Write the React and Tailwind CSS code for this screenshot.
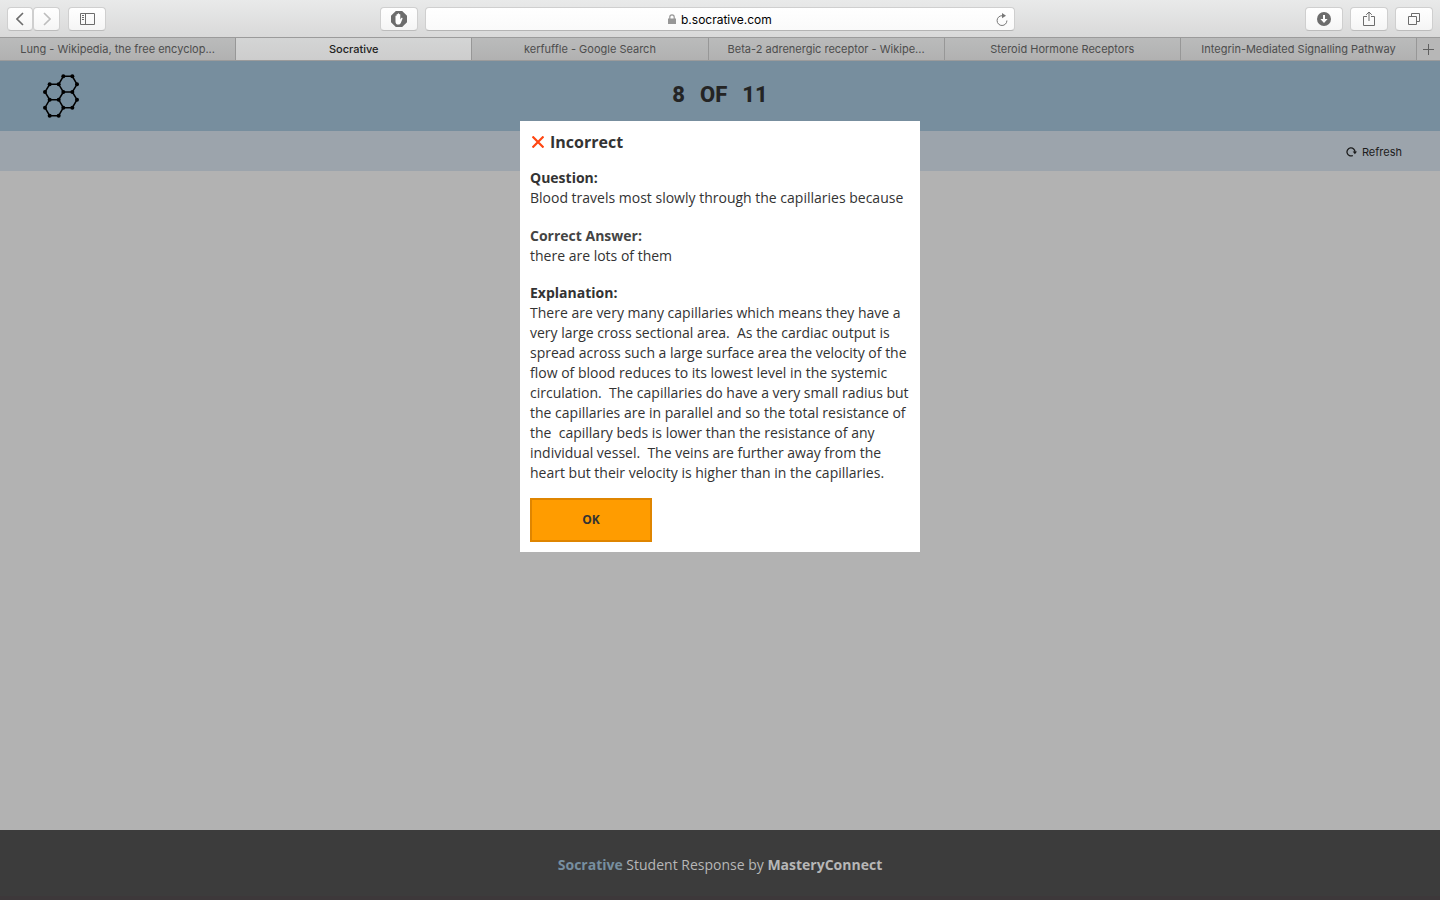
const toolButton =
  "flex h-6 items-center justify-center rounded border border-[#cfcfcf] border-b-[#bcbcbc] bg-linear-to-b from-white to-[#f5f5f5] text-[#6c6c6c]";

const tabs = [
  { title: "Lung - Wikipedia, the free encyclop..." },
  { title: "Socrative", active: true },
  { title: "kerfuffle - Google Search" },
  { title: "Beta-2 adrenergic receptor - Wikipe..." },
  { title: "Steroid Hormone Receptors" },
  { title: "Integrin-Mediated Signalling Pathway" },
];

const atoms = [
  [61, 6], [88, 6], [102, 30], [88, 53], [61, 53], [47, 30],
  [20, 30], [6, 53], [20, 76], [47, 76], [102, 76], [88, 100],
  [61, 100], [6, 100], [20, 124], [47, 124],
];

function Chevron({ flip }) {
  return (
    <svg width="8" height="14" viewBox="0 0 8 14" fill="none" stroke="currentColor" strokeWidth="1.6" aria-hidden="true">
      <path d={flip ? "M1 1l6 6-6 6" : "M7 1L1 7l6 6"} />
    </svg>
  );
}

function Toolbar() {
  return (
    <div className="flex h-[37px] items-center gap-[7px] bg-linear-to-b from-[#e9eaea] to-[#d9d9d9] px-[7px] pt-px">
      <div className="flex flex-1 items-center justify-between">
        <div className="flex gap-2">
          <div className="flex">
            <button className={`${toolButton} w-[26px]`} aria-label="Back"><Chevron /></button>
            <button className={`${toolButton} w-[27px]`} aria-label="Forward">
              <span className="text-[#bdbdbd]"><Chevron flip /></span>
            </button>
          </div>
          <button className={`${toolButton} w-[38px]`} aria-label="Show sidebar">
            <svg width="15" height="12" viewBox="0 0 15 12" fill="none" stroke="currentColor" aria-hidden="true">
              <path d="M.5.5h14v11H.5zM5.5.5v11M2 2.5h2M2 4.5h2M2 6.5h2" />
            </svg>
          </button>
        </div>
        <button className={`${toolButton} w-[38px]`} aria-label="Content blocker">
          <svg width="16" height="16" viewBox="0 0 16 16" aria-hidden="true">
            <path fill="currentColor" d="M4.8 0h6.4L16 4.8v6.4L11.2 16H4.8L0 11.2V4.8z" />
            <path
              fill="#fff"
              d="M4.500 5.100c0-.8 1.100-.8 1.100 0V3.600c0-.8 1.200-.8 1.200 0V2.900c0-.8 1.300-.8 1.300 0v.6c0-.8 1.200-.8 1.200 0v4.900l.8-1.200c.6-.8 1.700-.3 1.400.5l-1.400 3.600c-.5 1.500-1.400 2.300-2.800 2.300-1.900 0-2.800-1.300-2.800-3.200z"
            />
          </svg>
        </button>
      </div>
      <div className="flex h-6 w-[590px] min-w-0 items-center rounded border border-[#cfcfcf] border-b-[#b4b4b4] bg-linear-to-b from-white to-[#fafafa] px-1">
        <span className="w-4" />
        <label className="flex flex-1 items-center justify-center gap-[5px]">
          <svg width="8" height="10" viewBox="0 0 8 10" className="text-[#979797]" aria-hidden="true">
            <path fill="currentColor" d="M0 4.500h8V10H0z" />
            <path fill="none" stroke="currentColor" strokeWidth="1.200" d="M1.800 5V3a2.200 2.200 0 0 1 4.400 0v2" />
          </svg>
          <input
            type="text"
            aria-label="Address"
            defaultValue="b.socrative.com"
            className="w-[91px] bg-transparent p-0 pt-px text-[12px] leading-4 text-black outline-none"
          />
        </label>
        <button className="flex w-4 justify-center text-[#777]" aria-label="Reload">
          <svg width="12" height="13" viewBox="0 0 12 13" fill="none" stroke="currentColor" aria-hidden="true">
            <path d="M7.500 2.700H6A4.900 4.900 0 1 0 10.900 7.500" />
            <path fill="currentColor" stroke="none" d="M6 0l4 2.700-4 2.500z" />
          </svg>
        </button>
      </div>
      <div className="flex flex-1 items-center justify-end gap-[7px]">
        <button className={`${toolButton} w-[38px]`} aria-label="Downloads">
          <svg width="14" height="14" viewBox="0 0 14 14" aria-hidden="true">
            <circle cx="7" cy="7" r="7" fill="currentColor" />
            <path fill="#fff" d="M6 3h2v4h2.600L7 10.900 3.400 7H6z" />
          </svg>
        </button>
        <button className={`${toolButton} w-[38px]`} aria-label="Share">
          <svg width="12" height="16" viewBox="0 0 12 16" fill="none" stroke="currentColor" aria-hidden="true">
            <path d="M4 5.500H.5v9h11v-9H8M6 10V1M3.200 3.800L6 1l2.800 2.800" />
          </svg>
        </button>
        <button className={`${toolButton} w-[38px]`} aria-label="Show all tabs">
          <svg width="12" height="12" viewBox="0 0 12 12" fill="none" stroke="currentColor" aria-hidden="true">
            <path d="M.5 3.500h8v8h-8zM3.500 3.500v-3h8v8h-3" />
          </svg>
        </button>
      </div>
    </div>
  );
}

function TabStrip() {
  return (
    <nav className="flex h-6 border-y border-[#9b9b9b] text-[11px]" aria-label="Tabs">
      {tabs.map((tab) => (
        <button
          key={tab.title}
          className={`min-w-0 flex-1 truncate border-r border-[#979797] px-1 pt-px ${
            tab.active
              ? "bg-linear-to-b from-[#d4d5d5] to-[#cdcdcd] font-medium text-[#222]"
              : "bg-linear-to-b from-[#babbbb] to-[#b1b1b1] text-[#4d4d4d]"
          }`}
        >
          {tab.title}
        </button>
      ))}
      <button className="flex w-[23px] items-center justify-center bg-[#b7b7b7] text-[#606060]" aria-label="New tab">
        <svg width="11" height="11" viewBox="0 0 11 11" stroke="currentColor" aria-hidden="true">
          <path d="M5.500 0v11M0 5.500h11" />
        </svg>
      </button>
    </nav>
  );
}

function Logo() {
  return (
    <svg width="36" height="44" viewBox="0 0 108 130" role="img" aria-label="Socrative">
      <path
        fill="none"
        stroke="#000"
        strokeWidth="4.500"
        d="M61 6H88L102 30L88 53H61L47 30ZM47 30H20L6 53L20 76H47L61 53M88 53L102 76L88 100H61L47 76M20 76L6 100L20 124H47L61 100"
      />
      {atoms.map(([x, y]) => (
        <circle key={`${x}-${y}`} cx={x} cy={y} r="6" />
      ))}
    </svg>
  );
}

function ResultDialog() {
  return (
    <section
      role="dialog"
      aria-labelledby="result-title"
      className="absolute top-15 left-1/2 w-100 -translate-x-1/2 bg-white px-2.5 pt-[11px] pb-2.5 font-['Open_Sans',sans-serif] text-[14px] leading-5 text-[#333]"
    >
      <h2 id="result-title" className="flex items-center gap-1.5 pl-0.5 text-[16px] font-bold">
        <svg width="12" height="12" viewBox="0 0 12 12" stroke="#ff4612" strokeWidth="2.200" aria-hidden="true">
          <path d="M.5.5l11 11M11.500.5l-11 11" />
        </svg>
        Incorrect
      </h2>
      <h3 className="mt-4 font-bold">Question:</h3>
      <p>Blood travels most slowly through the capillaries because</p>
      <h3 className="mt-[18px] font-bold text-[#444]">Correct Answer:</h3>
      <p>there are lots of them</p>
      <h3 className="mt-[17px] font-bold">Explanation:</h3>
      <p className="whitespace-pre-wrap">
        {"There are very many capillaries which means they have a very large cross sectional area.  As the cardiac output is spread across such a large surface area the velocity of the flow of blood reduces to its lowest level in the systemic circulation.  The capillaries do have a very small radius but the capillaries are in parallel and so the total resistance of the  capillary beds is lower than the resistance of any individual vessel.  The veins are further away from the heart but their velocity is higher than in the capillaries."}
      </p>
      <button className="mt-[15px] block h-11 w-[122px] border-2 border-[#df8500] bg-[#ff9c00] text-[12px] font-bold">
        OK
      </button>
    </section>
  );
}

export default function App() {
  return (
    <div className="flex min-h-screen flex-col bg-[#b2b2b2] font-[Inter,sans-serif]">
      <Toolbar />
      <TabStrip />
      <main className="relative flex-1">
        <header className="grid h-[70px] grid-cols-3 items-center bg-[#778e9e] px-[43px]">
          <Logo />
          <h1 className="flex justify-center gap-[15px] pb-0.5 font-[Roboto,sans-serif] text-[22px] leading-6 font-extrabold text-[#242424]">
            <span>8</span> <span>OF</span> <span>11</span>
          </h1>
        </header>
        <div className="flex h-10 items-center justify-end bg-[#9ca4ac] px-[38px] pt-0.5">
          <button className="flex items-center gap-[5px] text-[11px] text-[#1c1c1c]">
            <svg width="11" height="10" viewBox="0 0 11 10" fill="none" stroke="currentColor" strokeWidth="1.300" aria-hidden="true">
              <path d="M6.800 8.500A4 4 0 1 1 9 5" />
              <path fill="currentColor" stroke="none" d="M6.700 4.500H11L8.900 7.200z" />
            </svg>
            Refresh
          </button>
        </div>
        <ResultDialog />
      </main>
      <footer className="flex h-[70px] items-center justify-center border-b-4 border-[#3d383a] bg-[#3c3c3c] pt-0.5 font-['Open_Sans',sans-serif] text-[14px] text-[#b7b7b7]">
        <p>
          <a href="#socrative" className="font-bold text-[#778fa0]">Socrative</a> Student Response by{" "}
          <a href="#masteryconnect" className="font-bold">MasteryConnect</a>
        </p>
      </footer>
    </div>
  );
}
